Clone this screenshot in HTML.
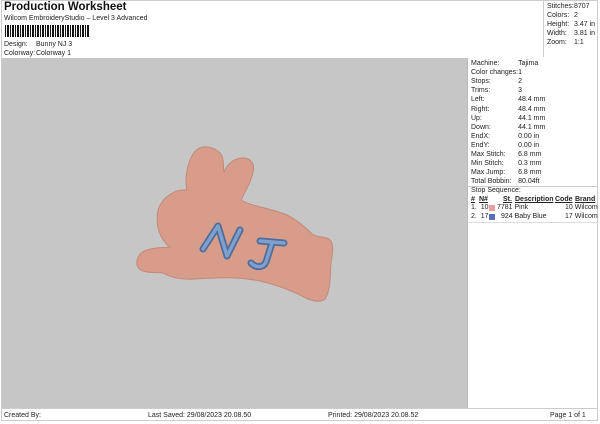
<!DOCTYPE html>
<html><head><style>
body{margin:0;width:600px;height:424px;background:#fff;font-family:"Liberation Sans",sans-serif;position:relative;overflow:hidden;color:#222}
.a{position:absolute;font-size:7px;white-space:nowrap}
table{border-collapse:collapse}
td{padding:0;font-size:7px;height:9.1px;line-height:9px;white-space:nowrap}
</style></head><body>
<div style="position:absolute;left:1px;top:0;width:597px;height:421px;border:1px solid #ccc;box-sizing:border-box"></div>
<div class="a" style="left:4px;top:1px;font-size:11.5px;font-weight:bold;color:#111">Production Worksheet</div>
<div class="a" style="left:4px;top:15px">Wilcom EmbroideryStudio – Level 3 Advanced</div>
<div style="position:absolute;left:5px;top:25px;width:84px;height:12px;background:repeating-linear-gradient(90deg,#111 0 1px,#fff 1px 2px,#111 2px 4px,#fff 4px 5px)"></div>
<div class="a" style="left:4px;top:41px">Design:</div><div class="a" style="left:36px;top:41px">Bunny NJ 3</div>
<div class="a" style="left:4px;top:50px">Colorway:</div><div class="a" style="left:36px;top:50px">Colorway 1</div>
<div style="position:absolute;left:543px;top:1px;width:1px;height:56px;background:#ccc"></div>
<table style="position:absolute;left:547px;top:2px"><tr><td style="width:27px">Stitches:</td><td>8707</td></tr><tr><td>Colors:</td><td>2</td></tr><tr><td>Height:</td><td>3.47 in</td></tr><tr><td>Width:</td><td>3.81 in</td></tr><tr><td>Zoom:</td><td>1:1</td></tr></table>
<div style="position:absolute;left:2px;top:58px;width:465px;height:350px;background:#c6c6c6"></div>
<div style="position:absolute;left:467px;top:58px;width:1px;height:350px;background:#bbb"></div>
<table style="position:absolute;left:471px;top:59px"><tr><td style="width:46px">Machine:</td><td>Tajima</td></tr><tr><td>Color changes:</td><td>1</td></tr><tr><td>Stops:</td><td>2</td></tr><tr><td>Trims:</td><td>3</td></tr><tr><td>Left:</td><td>48.4 mm</td></tr><tr><td>Right:</td><td>48.4 mm</td></tr><tr><td>Up:</td><td>44.1 mm</td></tr><tr><td>Down:</td><td>44.1 mm</td></tr><tr><td>EndX:</td><td>0.00 in</td></tr><tr><td>EndY:</td><td>0.00 in</td></tr><tr><td>Max Stitch:</td><td>6.8 mm</td></tr><tr><td>Min Stitch:</td><td>0.3 mm</td></tr><tr><td>Max Jump:</td><td>6.8 mm</td></tr><tr><td>Total Bobbin:</td><td>80.04ft</td></tr></table>
<div style="position:absolute;left:468px;top:186px;width:130px;height:1px;background:#ccc"></div>
<div class="a" style="left:471px;top:187px">Stop Sequence:</div>
<div class="a" style="left:471px;top:196px;font-weight:bold;text-decoration:underline">#</div>
<div class="a" style="left:479px;top:196px;font-weight:bold;text-decoration:underline">N#</div>
<div class="a" style="left:503px;top:196px;font-weight:bold;text-decoration:underline">St.</div>
<div class="a" style="left:515px;top:196px;font-weight:bold;text-decoration:underline">Description</div>
<div class="a" style="left:555px;top:196px;font-weight:bold;text-decoration:underline">Code</div>
<div class="a" style="left:575px;top:196px;font-weight:bold;text-decoration:underline">Brand</div>
<div class="a" style="left:471px;top:204px">1.&nbsp; 10</div><div style="position:absolute;left:489px;top:205px;width:6px;height:6px;background:#e8a0a0"></div><div class="a" style="left:497px;top:204px">7781 Pink</div><div class="a" style="left:565px;top:204px">10 Wilcom</div>
<div class="a" style="left:471px;top:213px">2.&nbsp; 17</div><div style="position:absolute;left:489px;top:214px;width:6px;height:6px;background:#5a6fb5"></div><div class="a" style="left:501px;top:213px">924 Baby Blue</div><div class="a" style="left:565px;top:213px">17 Wilcom</div>
<div style="position:absolute;left:468px;top:222px;width:130px;height:1px;background:#ddd"></div>
<svg style="position:absolute;left:0;top:0" width="600" height="424">
<path d="M147 250 C155 247 162 248 170 247 C160 240 155 225 158 210 C162 197 175 189 187 190 C185 182 186 170 190 160 C194 150 200 146 207 147 C215 148 222 152 223 160 C224 166 223 170 224 172 C227 165 233 158 243 158 C251 158 255 164 253 172 C251 182 246 190 241 200 C250 206 270 208 287 215 C297 220 304 226 312 234 C318 238 324 236 329 239 C334 243 333 252 331 262 C330 275 331 290 325 299 C320 303 314 301 308 299 C298 294 285 287 260 281 C240 277 220 277 195 279 C180 280 170 277 163 273 C152 272 140 274 137 265 C136 258 140 252 147 250 Z" fill="#d89d8a" stroke="#c4887a" stroke-width="1"/>
<path d="M203 249 L218 226 L227 256 L240 230" fill="none" stroke="#4d6c9c" stroke-width="7" stroke-linecap="round" stroke-linejoin="round"/>
<path d="M203 249 L218 226 L227 256 L240 230" fill="none" stroke="#7f9fcc" stroke-width="3.5" stroke-linecap="round" stroke-linejoin="round"/>
<path d="M260 241 L284 243 M272 243 L266 262 C263 268 256 268 251 263" fill="none" stroke="#4d6c9c" stroke-width="7" stroke-linecap="round" stroke-linejoin="round"/>
<path d="M260 241 L284 243 M272 243 L266 262 C263 268 256 268 251 263" fill="none" stroke="#7f9fcc" stroke-width="3.5" stroke-linecap="round" stroke-linejoin="round"/>
</svg>
<div style="position:absolute;left:1px;top:408px;width:597px;height:1px;background:#ccc"></div>
<div class="a" style="left:4px;top:412px">Created By:</div>
<div class="a" style="left:148px;top:412px">Last Saved: 29/08/2023 20.08.50</div>
<div class="a" style="left:328px;top:412px">Printed: 29/08/2023 20.08.52</div>
<div class="a" style="left:550px;top:412px">Page 1 of 1</div>
</body></html>
